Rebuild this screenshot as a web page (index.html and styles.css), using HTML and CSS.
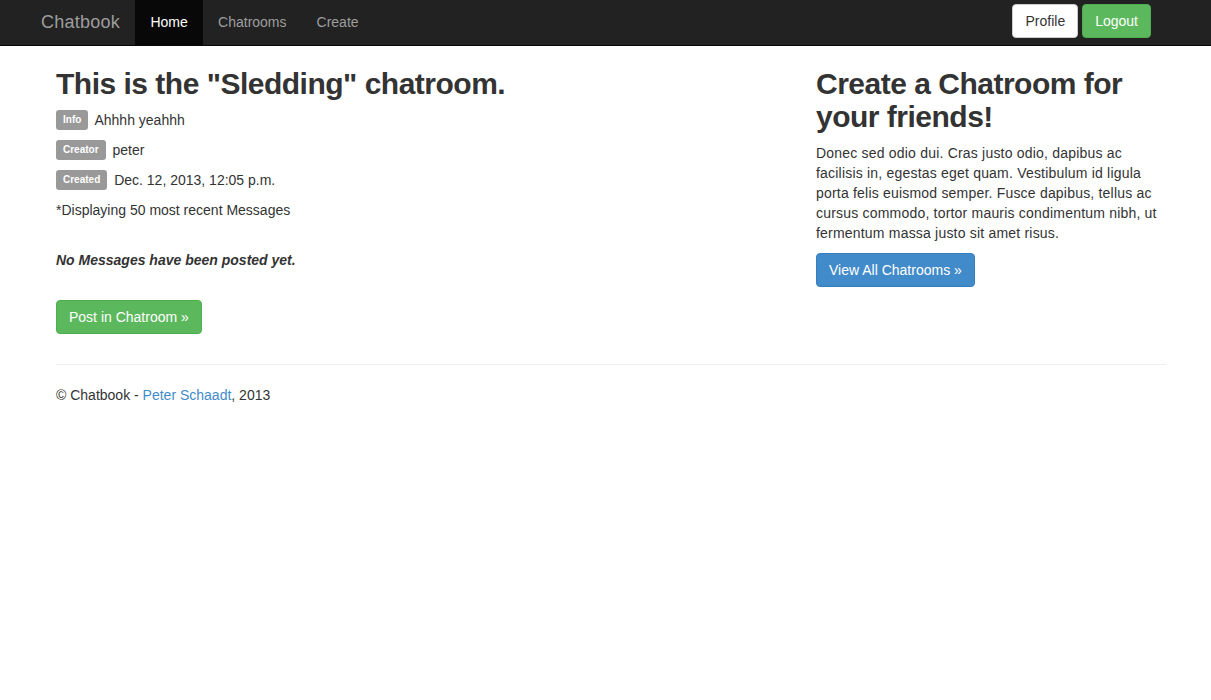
FILE: index.html
```html
<!DOCTYPE html>
<html>
<head>
<meta charset="utf-8">
<title>Chatbook</title>
<link rel="stylesheet" href="styles.css">
</head>
<body>
<nav class="navbar">
  <a class="brand" href="#">Chatbook</a>
  <ul class="nav">
    <li><a class="nav-link active" href="#">Home</a></li>
    <li><a class="nav-link" href="#">Chatrooms</a></li>
    <li><a class="nav-link" href="#">Create</a></li>
  </ul>
  <div class="nav-actions">
    <a class="btn btn-default" href="#">Profile</a>
    <a class="btn btn-success" href="#">Logout</a>
  </div>
</nav>
<div class="container">
  <div class="row">
    <div class="col-main">
      <h2>This is the "<strong>Sledding</strong>" chatroom.</h2>
      <p><span class="label">Info</span> Ahhhh yeahhh</p>
      <p><span class="label">Creator</span> peter</p>
      <p><span class="label">Created</span> Dec. 12, 2013, 12:05 p.m.</p>
      <p>*Displaying 50 most recent Messages</p>
      <p class="empty"><strong><em>No Messages have been posted yet.</em></strong></p>
      <p class="action"><a class="btn btn-success" href="#">Post in Chatroom »</a></p>
    </div>
    <div class="col-side">
      <h2>Create a Chatroom for your friends!</h2>
      <p class="side-text">Donec sed odio dui. Cras justo odio, dapibus ac facilisis in, egestas eget quam. Vestibulum id ligula porta felis euismod semper. Fusce dapibus, tellus ac cursus commodo, tortor mauris condimentum nibh, ut fermentum massa justo sit amet risus.</p>
      <p><a class="btn btn-primary" href="#">View All Chatrooms »</a></p>
    </div>
  </div>
  <hr class="rule">
  <footer class="footer">
    <p>© Chatbook - <a class="link" href="#">Peter Schaadt</a>, 2013</p>
  </footer>
</div>
</body>
</html>
```
FILE: styles.css
```css
* { box-sizing: border-box; }
html, body { margin: 0; padding: 0; }
body {
  font-family: "Liberation Sans", Arial, sans-serif;
  font-size: 14px;
  line-height: 20px;
  color: #333;
  background: #fff;
}
a { text-decoration: none; }

.navbar {
  display: flex;
  align-items: stretch;
  height: 46px;
  background: #222;
  border-bottom: 1px solid #080808;
  padding: 0 60px 0 26px;
}
.brand {
  display: block;
  padding: 0 15px;
  font-size: 18px;
  line-height: 45px;
  letter-spacing: 0.25px;
  color: #9d9d9d;
}
.nav {
  display: flex;
  list-style: none;
  margin: 0;
  padding: 0;
}
.nav li { display: block; }
.nav-link {
  display: block;
  padding: 0 15px;
  line-height: 45px;
  color: #9d9d9d;
}
.nav-link.active {
  background: #080808;
  color: #fff;
  padding: 0 15px 0 15px;
  min-width: 68px;
  text-align: center;
}
.nav-actions {
  margin-left: auto;
  display: flex;
  gap: 4px;
  padding-top: 4px;
}

.btn {
  display: inline-block;
  padding: 6px 12px;
  font-size: 14px;
  line-height: 20px;
  border: 1px solid transparent;
  border-radius: 4px;
  height: 34px;
}
.btn-default { background: #fff; border-color: #ccc; color: #333; }
.btn-success { background: #5cb85c; border-color: #4cae4c; color: #fff; }
.btn-primary { background: #428bca; border-color: #357ebd; color: #fff; }

.container {
  width: 1110px;
  margin-left: 56px;
}
.row {
  display: grid;
  grid-template-columns: 730px 350px;
  column-gap: 30px;
}
h2 {
  margin: 21px 0 10px;
  font-size: 30px;
  line-height: 33px;
  font-weight: bold;
  letter-spacing: -0.5px;
  color: #333;
}
h2 strong { font-weight: bold; }
p { margin: 0 0 10px; }
.side-text { letter-spacing: 0.2px; }
.label {
  display: inline-block;
  background: #999;
  color: #fff;
  font-size: 10px;
  font-weight: bold;
  line-height: 10px;
  padding: 5px 7px;
  border-radius: 3px;
  vertical-align: top;
  margin-right: 3px;
}
.empty { margin-top: 30px; }
.action { margin-top: 30px; }
.rule {
  margin: 20px 0 20px;
  border: 0;
  border-top: 1px solid #eee;
}
.footer p { margin: 0; }
.link { color: #428bca; }
```
